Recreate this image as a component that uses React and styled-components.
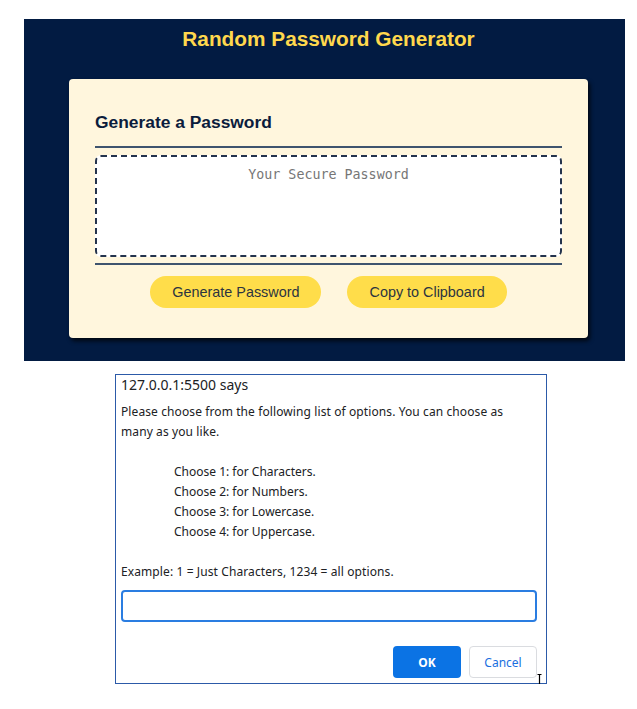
import React from "react";
import styled, { createGlobalStyle } from "styled-components";

const GlobalStyle = createGlobalStyle`
  html, body { margin: 0; padding: 0; background: #ffffff; }
  body { font-family: "Liberation Sans", Arial, sans-serif; }
  * { box-sizing: border-box; }
`;

const Page = styled.div`
  padding: 19px 0 0 24px;
`;

const Hero = styled.section`
  width: 601px;
  height: 342px;
  background: #021b42;
  padding: 0 37px 0 45px;
  display: flex;
  flex-direction: column;
`;

const Title = styled.h1`
  margin: 0 0 20px;
  font: 700 20.8px/40px "Liberation Sans", Arial, sans-serif;
  color: #ffd84d;
  text-align: center;
`;

const Card = styled.div`
  height: 259px;
  background: #fff6dd;
  border-radius: 4px;
  box-shadow: 2px 3px 4px rgba(0, 0, 0, 0.75);
  padding: 32px 26px 30px;
  display: flex;
  flex-direction: column;
`;

const CardHeading = styled.h2`
  margin: 0;
  font: 700 17.4px/22px "Liberation Sans", Arial, sans-serif;
  color: #0b1c3c;
`;

const Divider = styled.div`
  height: 2px;
  background: #3f546e;
  margin: ${(p) => p.$m};
`;

const PasswordBox = styled.textarea`
  display: block;
  width: 100%;
  height: 102px;
  resize: none;
  border: 2px dashed #24334d;
  border-radius: 6px;
  background: #ffffff;
  padding: 10px;
  font: 13.33px/16px "DejaVu Sans Mono", "Liberation Mono", monospace;
  text-align: center;
  color: #222;
  outline: none;
  &::placeholder { color: #767676; }
`;

const ButtonRow = styled.div`
  display: flex;
  justify-content: center;
  gap: 26px;
`;

const PillButton = styled.button`
  height: 32px;
  padding: 0 22px;
  border: none;
  border-radius: 16px;
  background: #ffdd4a;
  color: #2c3440;
  font: 400 14.4px "Liberation Sans", Arial, sans-serif;
  cursor: pointer;
`;

const Dialog = styled.div`
  position: relative;
  margin: 13px 0 0 91px;
  width: 432px;
  height: 310px;
  border: 1px solid #2c5aa8;
  background: #ffffff;
  padding: 0 9px 5px 5px;
  display: flex;
  flex-direction: column;
  font-family: "Noto Sans", "Open Sans", sans-serif;
  color: #202124;
`;

const DialogTitle = styled.div`
  font-size: 14px;
  line-height: 19px;
`;

const DialogText = styled.p`
  margin: ${(p) => p.$m || "0"};
  font-size: 12px;
  line-height: 20px;
  letter-spacing: 0.1px;
`;

const ChoiceList = styled.ul`
  list-style: none;
  margin: 20px 0;
  padding: 0 0 0 53px;
  font-size: 12px;
  line-height: 20px;
`;

const PromptInput = styled.input`
  margin-top: 8px;
  height: 32px;
  width: 100%;
  border: 2px solid #2a7de1;
  border-radius: 4px;
  outline: none;
  padding: 0 8px;
  font: 12px "Noto Sans", sans-serif;
`;

const DialogActions = styled.div`
  margin-top: 24px;
  display: flex;
  justify-content: flex-end;
  gap: 8px;
`;

const DialogButton = styled.button`
  width: 68px;
  height: 32px;
  border-radius: 4px;
  font: ${(p) => (p.$primary ? 700 : 400)} 12px "Noto Sans", sans-serif;
  background: ${(p) => (p.$primary ? "#0b73e4" : "#ffffff")};
  color: ${(p) => (p.$primary ? "#ffffff" : "#1a6fe0")};
  border: ${(p) => (p.$primary ? "none" : "1px solid #dadce0")};
  cursor: pointer;
`;

const TextCursor = styled.svg`
  position: absolute;
  left: 421px;
  top: 299px;
  width: 5px;
  height: 15px;
`;

export default function App() {
  return (
    <>
      <GlobalStyle />
      <Page>
        <Hero>
          <Title>Random Password Generator</Title>
          <Card>
            <CardHeading>Generate a Password</CardHeading>
            <Divider $m="13px 0 7px" />
            <PasswordBox readOnly placeholder="Your Secure Password" />
            <Divider $m="6px 0 11px" />
            <ButtonRow>
              <PillButton>Generate Password</PillButton>
              <PillButton>Copy to Clipboard</PillButton>
            </ButtonRow>
          </Card>
        </Hero>
        <Dialog>
          <DialogTitle>127.0.0.1:5500 says</DialogTitle>
          <DialogText $m="8px 0 0">
            Please choose from the following list of options. You can choose as
            <br />
            many as you like.
          </DialogText>
          <ChoiceList>
            <li>Choose 1: for Characters.</li>
            <li>Choose 2: for Numbers.</li>
            <li>Choose 3: for Lowercase.</li>
            <li>Choose 4: for Uppercase.</li>
          </ChoiceList>
          <DialogText>Example: 1 = Just Characters, 1234 = all options.</DialogText>
          <PromptInput />
          <DialogActions>
            <DialogButton $primary>OK</DialogButton>
            <DialogButton>Cancel</DialogButton>
          </DialogActions>
          <TextCursor viewBox="0 0 5 15">
            <path d="M0.5 0.5H4.5M2.5 0.5V14.5M0.5 14.5H4.5" stroke="#000" strokeWidth="1.2" fill="none" />
          </TextCursor>
        </Dialog>
      </Page>
    </>
  );
}
